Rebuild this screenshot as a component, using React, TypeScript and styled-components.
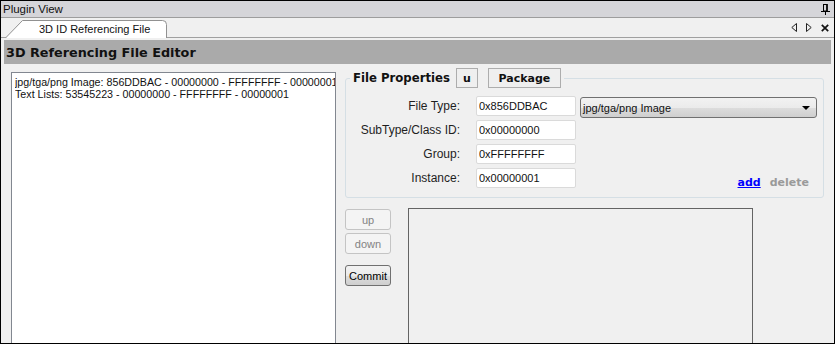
import { Fragment } from 'react';
import styled, { createGlobalStyle } from 'styled-components';

const GlobalStyle = createGlobalStyle`
  html, body {
    margin: 0;
    padding: 0;
    background: #f0f0f0;
  }
  body {
    font-family: "Liberation Sans", Arial, sans-serif;
    font-size: 11px;
    color: #000;
  }
  * {
    box-sizing: border-box;
  }
`;

const Frame = styled.div`
  width: 835px;
  height: 344px;
  border: 1px solid #000;
  display: flex;
  flex-direction: column;
  overflow: hidden;
  background: #f0f0f0;
`;

const TitleBar = styled.div`
  height: 17px;
  flex: none;
  display: flex;
  align-items: center;
  justify-content: space-between;
  padding: 0 4px 0 2px;
  background: #d5d5d9;
  border-bottom: 1px solid #9d9d9d;
  font-size: 11.5px;
  color: #111;
`;

const TabStrip = styled.div`
  height: 20px;
  flex: none;
  display: flex;
  align-items: flex-end;
  justify-content: space-between;
  padding: 0 5px 0 4px;
  border-bottom: 1px solid #a0a0a0;
  background: #f0f0f0;
`;

const Tab = styled.div`
  position: relative;
  width: 162px;
  height: 18px;
  margin-bottom: -1px;
  padding-left: 34px;
  display: flex;
  align-items: center;
  color: #111;

  & > svg {
    position: absolute;
    inset: 0;
  }

  & > span {
    position: relative;
  }
`;

const TabNav = styled.div`
  align-self: center;
  display: flex;
  align-items: center;
  gap: 9px;
`;

const Body = styled.div`
  flex: 1;
  min-height: 0;
  display: flex;
  flex-direction: column;
  padding: 2px 3px 0;
  overflow: hidden;
`;

const Header = styled.div`
  height: 24px;
  flex: none;
  display: flex;
  align-items: center;
  padding-left: 2px;
  background: #aaaaaa;
  font-family: "DejaVu Sans", Verdana, sans-serif;
  font-weight: bold;
  font-size: 12.8px;
  color: #111;
`;

const Content = styled.div`
  flex: 1;
  min-height: 0;
  display: flex;
  padding: 4px 0 0 7px;
  overflow: hidden;
`;

const ListBox = styled.div`
  width: 325px;
  margin-top: 4px;
  margin-bottom: -10px;
  padding: 3px 0 0 3px;
  background: #fff;
  border: 1px solid #828790;
  overflow: hidden;
`;

const ListItem = styled.div`
  line-height: 12px;
  font-size: 10.7px;
  white-space: nowrap;
  overflow: hidden;
  color: #111;
`;

const RightPane = styled.div`
  width: 479px;
  margin-left: 9px;
  display: flex;
  flex-direction: column;
`;

const GroupBox = styled.fieldset`
  margin: 0;
  padding: 8px 6px 9px 0;
  min-width: 0;
  border: 1px solid #d5dfe5;
  border-radius: 3px;
`;

const Legend = styled.legend`
  margin-left: 4px;
  padding: 0 3px;
  display: flex;
  align-items: center;
  font-family: "DejaVu Sans", Verdana, sans-serif;
  font-weight: bold;
  font-size: 11.7px;
  color: #111;
`;

const LegendButton = styled.div<{ $width: number; $gap: number }>`
  width: ${(p) => p.$width}px;
  height: 20px;
  margin-left: ${(p) => p.$gap}px;
  display: flex;
  align-items: center;
  justify-content: center;
  border: 1px solid #adadad;
  background: #efefef;
  font-size: 11px;
`;

const FieldGrid = styled.div`
  display: grid;
  grid-template-columns: 126px 100px 1fr;
  grid-auto-rows: 20px;
  column-gap: 4px;
  row-gap: 4px;
`;

const Label = styled.div`
  grid-column: 1;
  text-align: right;
  padding-right: 12px;
  line-height: 20px;
  font-size: 12px;
  color: #1e1e1e;
`;

const Input = styled.input`
  grid-column: 2;
  width: 100px;
  height: 20px;
  margin: 0;
  padding: 0 2px;
  border: 1px solid #dadada;
  border-radius: 2px;
  background: #fff;
  font-family: "Liberation Sans", Arial, sans-serif;
  font-size: 11px;
  color: #111;
  outline: none;
`;

const Combo = styled.div`
  grid-column: 3;
  grid-row: 1;
  height: 21px;
  margin-top: 1px;
  display: flex;
  align-items: center;
  justify-content: space-between;
  padding: 0 6px 0 2px;
  border: 1px solid #707070;
  border-radius: 3px;
  background: linear-gradient(#f2f2f2 0%, #ebebeb 50%, #dddddd 51%, #cfcfcf 100%);
  color: #111;
`;

const Links = styled.div`
  grid-column: 3;
  grid-row: 4;
  justify-self: end;
  align-self: end;
  margin-bottom: -2px;
  padding-right: 8px;
  display: flex;
  gap: 9px;
  font-family: "DejaVu Sans", Verdana, sans-serif;
  font-weight: bold;
  font-size: 11px;
  line-height: 14px;
`;

const LinkText = styled.span<{ $disabled?: boolean }>`
  color: ${(p) => (p.$disabled ? '#9a9a9a' : '#0000ff')};
  text-decoration: ${(p) => (p.$disabled ? 'none' : 'underline')};
`;

const Lower = styled.div`
  flex: 1;
  display: flex;
  margin-top: 10px;
  min-height: 0;
`;

const ButtonColumn = styled.div`
  width: 46px;
  margin-top: 1px;
  display: flex;
  flex-direction: column;
  gap: 3px;
`;

const ActionButton = styled.div<{ $disabled?: boolean; $gapTop?: number }>`
  height: 21px;
  margin-top: ${(p) => p.$gapTop ?? 0}px;
  display: flex;
  align-items: center;
  justify-content: center;
  border: 1px solid ${(p) => (p.$disabled ? '#c4c4c4' : '#707070')};
  border-radius: 3px;
  background: ${(p) =>
    p.$disabled
      ? '#f4f4f4'
      : 'linear-gradient(#f2f2f2 0%, #ebebeb 50%, #dddddd 51%, #cfcfcf 100%)'};
  color: ${(p) => (p.$disabled ? '#838383' : '#000')};
`;

const Preview = styled.div`
  width: 345px;
  margin-left: 17px;
  margin-bottom: -10px;
  border: 1px solid #646464;
  background: #f0f0f0;
`;

const PinIcon = () => (
  <svg width="9" height="11" viewBox="0 0 9 11">
    <rect x="2.5" y="0.5" width="3.5" height="6.5" fill="none" stroke="#000" />
    <line x1="6" y1="0" x2="6" y2="7" stroke="#000" strokeWidth="1.5" />
    <line x1="0" y1="7.5" x2="9" y2="7.5" stroke="#000" />
    <line x1="4.5" y1="8" x2="4.5" y2="11" stroke="#000" />
  </svg>
);

const ArrowLeft = () => (
  <svg width="6" height="9" viewBox="0 0 6 9">
    <polygon points="5.5,0.5 0.8,4.5 5.5,8.5" fill="none" stroke="#222" />
  </svg>
);

const ArrowRight = () => (
  <svg width="6" height="9" viewBox="0 0 6 9">
    <polygon points="0.5,0.5 5.2,4.5 0.5,8.5" fill="none" stroke="#222" />
  </svg>
);

const CloseIcon = () => (
  <svg width="8" height="8" viewBox="0 0 8 8">
    <path d="M0.8 0.8 L7.2 7.2 M7.2 0.8 L0.8 7.2" stroke="#111" strokeWidth="1.7" />
  </svg>
);

const fields = [
  { label: 'File Type:', value: '0x856DDBAC' },
  { label: 'SubType/Class ID:', value: '0x00000000' },
  { label: 'Group:', value: '0xFFFFFFFF' },
  { label: 'Instance:', value: '0x00000001' }
];

const entries = [
  'jpg/tga/png Image: 856DDBAC - 00000000 - FFFFFFFF - 00000001',
  'Text Lists: 53545223 - 00000000 - FFFFFFFF - 00000001'
];

export default function App() {
  return (
    <>
      <GlobalStyle />
      <Frame>
        <TitleBar>
          <span>Plugin View</span>
          <PinIcon />
        </TitleBar>
        <TabStrip>
          <Tab>
            <svg width="162" height="18" viewBox="0 0 162 18">
              <path
                d="M0.5 18 L17.5 0.5 H157.5 Q161.5 0.5 161.5 4.5 V18"
                fill="#fff"
                stroke="#919191"
              />
            </svg>
            <span>3D ID Referencing File</span>
          </Tab>
          <TabNav>
            <ArrowLeft />
            <ArrowRight />
            <CloseIcon />
          </TabNav>
        </TabStrip>
        <Body>
          <Header>3D Referencing File Editor</Header>
          <Content>
            <ListBox>
              {entries.map((entry) => (
                <ListItem key={entry}>{entry}</ListItem>
              ))}
            </ListBox>
            <RightPane>
              <GroupBox>
                <Legend>
                  File Properties
                  <LegendButton $width={22} $gap={6}>u</LegendButton>
                  <LegendButton $width={73} $gap={10}>Package</LegendButton>
                </Legend>
                <FieldGrid>
                  {fields.map((f, i) => (
                    <Fragment key={f.label}>
                      <Label style={{ gridRow: i + 1 }}>{f.label}</Label>
                      <Input style={{ gridRow: i + 1 }} readOnly value={f.value} />
                    </Fragment>
                  ))}
                  <Combo>
                    <span>jpg/tga/png Image</span>
                    <svg width="8" height="4" viewBox="0 0 8 4">
                      <polygon points="0,0 8,0 4,4" fill="#000" />
                    </svg>
                  </Combo>
                  <Links>
                    <LinkText>add</LinkText>
                    <LinkText $disabled>delete</LinkText>
                  </Links>
                </FieldGrid>
              </GroupBox>
              <Lower>
                <ButtonColumn>
                  <ActionButton $disabled>up</ActionButton>
                  <ActionButton $disabled>down</ActionButton>
                  <ActionButton $gapTop={8}>Commit</ActionButton>
                </ButtonColumn>
                <Preview />
              </Lower>
            </RightPane>
          </Content>
        </Body>
      </Frame>
    </>
  );
}
